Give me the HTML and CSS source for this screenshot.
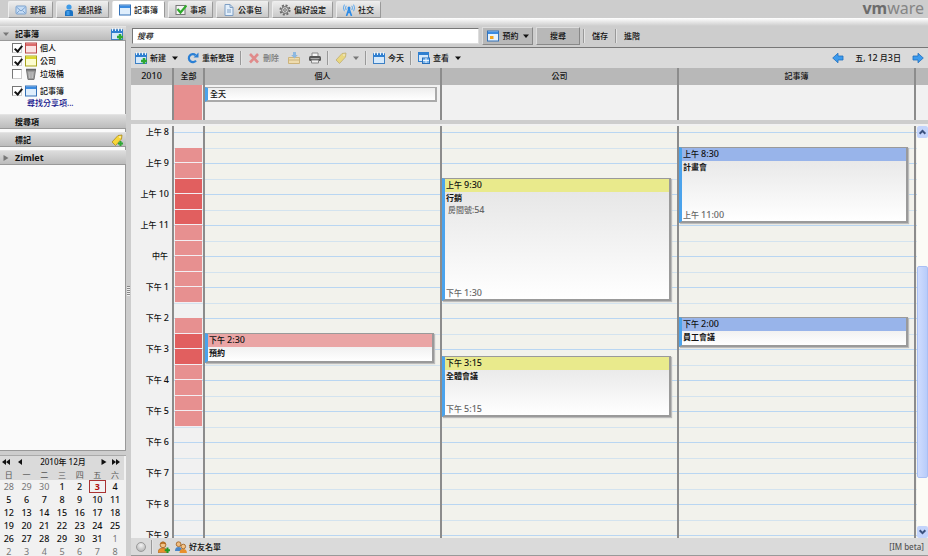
FILE: index.html
```html
<!DOCTYPE html>
<html lang="zh-Hant">
<head>
<meta charset="utf-8">
<title>記事簿</title>
<link rel="stylesheet" href="styles.css">
</head>
<body>
<svg class="defs" aria-hidden="true">
  <symbol id="mail" viewBox="0 0 12 12"><rect x="1" y="2" width="10" height="8" rx="1" fill="#c5dcf5" stroke="#7da3cf"/><path d="M1.500 3l4.500 4 4.500-4M1.500 9.500l3-3M10.500 9.500l-3-3" fill="none" stroke="#7da3cf"/></symbol>
  <symbol id="person" viewBox="0 0 12 12"><path d="M2 12V8q0-2 2.500-2h3Q10 6 10 8v4z" fill="#1b73c4"/><circle cx="6" cy="3" r="2.600" fill="#3f9be8"/><path d="M3.500 7h3v4h-3z" fill="#3f9be8"/></symbol>
  <symbol id="cal-blue" viewBox="0 0 12 12"><rect x=".5" y="1" width="11" height="10" fill="#dfeefc" stroke="#3572b8"/><path d="M1 1.500h10V4H1z" fill="#3b8be0"/></symbol>
  <symbol id="cal-red" viewBox="0 0 12 12"><rect x=".5" y="1" width="11" height="10" fill="#fbe3e3" stroke="#b84a4a"/><path d="M1 1.500h10V4H1z" fill="#dc6b6b"/></symbol>
  <symbol id="cal-yellow" viewBox="0 0 12 12"><rect x=".5" y="1" width="11" height="10" fill="#fdfdd0" stroke="#a9a51f"/><path d="M1 1.500h10V4H1z" fill="#dcd82f"/></symbol>
  <symbol id="cal-pad" viewBox="0 0 12 12"><rect x=".5" y="2" width="11" height="9.500" fill="#d5e9fb" stroke="#3d80c4"/><path d="M0 1.500h12V5H0z" fill="#2f7fd0"/><path d="M1.500 0v3M4.500 0v3M7.500 0v3M10.500 0v3" stroke="#e8f3fd"/></symbol>
  <symbol id="cal-new" viewBox="0 0 12 12"><use href="#cal-pad"/><path d="M9 6v6M6 9h6" stroke="#2fa836" stroke-width="2.500"/></symbol>
  <symbol id="check" viewBox="0 0 12 12"><rect x="1" y="1.500" width="9" height="9" fill="#f4f4f4" stroke="#777"/><path d="M2.500 5l3 3.500L11.500 1.500" fill="none" stroke="#2faa2b" stroke-width="2.200"/></symbol>
  <symbol id="doc" viewBox="0 0 12 12"><path d="M2 .5h5l3 3v8H2z" fill="#e3effb" stroke="#7f9fc4"/><path d="M7 .5v3h3M4 6h4M4 8h4" fill="none" stroke="#7f9fc4"/></symbol>
  <symbol id="gear" viewBox="0 0 12 12"><circle cx="6" cy="6" r="4.600" fill="none" stroke="#6b6b6b" stroke-width="2" stroke-dasharray="2 1.610"/><circle cx="6" cy="6" r="3.400" fill="#d6d6d6" stroke="#6b6b6b"/><circle cx="6" cy="6" r="1.300" fill="#f0f0f0" stroke="#6b6b6b"/></symbol>
  <symbol id="social" viewBox="0 0 12 12"><path d="M6 4.500L3.500 12M6 4.500L8.500 12M4.500 8.500h3" fill="none" stroke="#2d8be6" stroke-width="1.600"/><circle cx="6" cy="4" r="1.500" fill="#2d8be6"/><path d="M3.200 1.800q-1.400 2 0 4.200M1.400.6q-2 3.200 0 6.600M8.800 1.800q1.400 2 0 4.200M10.600.6q2 3.200 0 6.600" fill="none" stroke="#5ba8ee"/></symbol>
  <symbol id="trash" viewBox="0 0 12 12"><path d="M1.500 2h9l-1.500 9.500H3z" fill="#9b9b9b" stroke="#777"/><path d="M1 1.500h10" stroke="#666" stroke-width="1.500"/><path d="M4 4l.5 6M6 4v6M8 4l-.5 6" stroke="#cfcfcf" stroke-width=".8"/></symbol>
  <symbol id="tag" viewBox="0 0 12 12"><path d="M1 8L7 1.500 11 1l-.5 4L4.500 11.500z" fill="#f7d637" stroke="#a98a22" stroke-width=".8"/><circle cx="9" cy="3" r=".8" fill="#fff"/></symbol>
  <symbol id="tag-new" viewBox="0 0 12 12"><use href="#tag"/><path d="M9.500 7v5M7 9.500h5" stroke="#2fa836" stroke-width="2"/></symbol>
  <symbol id="appt" viewBox="0 0 12 12"><rect x=".5" y="1" width="11" height="10" fill="#e6f2fd" stroke="#3572b8"/><path d="M1 1.500h10V4H1z" fill="#3b8be0"/><rect x="3" y="6" width="3.500" height="3" fill="#f2a51e"/></symbol>
  <symbol id="refresh" viewBox="0 0 12 12"><path d="M9 8.600A4 4 0 1 1 8.600 3.200" fill="none" stroke="#2a7fd4" stroke-width="2.200"/><path d="M6.500 5.500h5V.5z" fill="#2a7fd4"/></symbol>
  <symbol id="delete" viewBox="0 0 12 12"><path d="M2 2l8 8.500M10 2l-8 8.500" stroke="#e08b8b" stroke-width="2.600"/></symbol>
  <symbol id="move" viewBox="0 0 12 12"><path d="M.5 11.500V5.500H11.500v6z" fill="#efdcae" stroke="#cdb47c"/><path d="M1 8h10" stroke="#cdb47c"/><path d="M5 0h3v3h1.800L6.500 6.500 3.200 3H5z" fill="#8db8e0"/></symbol>
  <symbol id="print" viewBox="0 0 12 12"><path d="M3 1h6v4H3z" fill="#f5f5f5" stroke="#888"/><rect x="0" y="4" width="12" height="5" rx="1.500" fill="#555"/><path d="M1.500 6.500h9" stroke="#aaa"/><path d="M2.500 8h7v3h-7z" fill="#f0f0f0" stroke="#888"/></symbol>
  <symbol id="view" viewBox="0 0 12 12"><rect x=".5" y=".5" width="10" height="9" fill="#d5e9fb" stroke="#2f7fd0"/><path d="M0 0h11v3H0z" fill="#2f7fd0"/><rect x="4.500" y="6" width="7" height="5.500" fill="#7eb8ee" stroke="#2a6fb8"/><path d="M5 8.500h6M8 6v5" stroke="#e8f3fd"/></symbol>
  <symbol id="arrow-right" viewBox="0 0 12 12"><path d="M1 4h5V1.200L11.300 6 6 10.800V8H1z" fill="#3c9bee" stroke="#1f6fbe" stroke-width=".8"/></symbol>
  <symbol id="arrow-left" viewBox="0 0 12 12"><path d="M11 4H6V1.200L.7 6 6 10.800V8h5z" fill="#3c9bee" stroke="#1f6fbe" stroke-width=".8"/></symbol>
  <symbol id="down" viewBox="0 0 6 6"><path d="M0 1.500h6L3 5z" fill="currentColor"/></symbol>
  <symbol id="tri-right" viewBox="0 0 6 6"><path d="M.5 0v6l5-3z" fill="currentColor"/></symbol>
  <symbol id="tri-left" viewBox="0 0 6 6"><path d="M5 0v6L1 3z" fill="currentColor"/></symbol>
  <symbol id="ff-right" viewBox="0 0 8 6"><path d="M0 0v6l4-3zM4 0v6l4-3z" fill="currentColor"/></symbol>
  <symbol id="ff-left" viewBox="0 0 8 6"><path d="M8 0v6L4 3zM4 0v6L0 3z" fill="currentColor"/></symbol>
  <symbol id="buddy" viewBox="0 0 12 12"><path d="M0 11.500Q0 7 5 7t5 4.500z" fill="#e8902c" stroke="#a8601a" stroke-width=".6"/><circle cx="5" cy="3.800" r="2.900" fill="#f3c488" stroke="#9a5a1a" stroke-width=".8"/><path d="M2.200 3.500Q2.500.7 5 .7t2.800 2.800Q5 1.800 2.200 3.500" fill="#b86e22"/></symbol>
  <symbol id="buddy-add" viewBox="0 0 12 12"><use href="#buddy"/><path d="M9.500 6.500v5.500M6.700 9.200h5.300" stroke="#1f9a26" stroke-width="2"/></symbol>
  <symbol id="buddies" viewBox="0 0 12 12"><path d="M0 10q0-4 3.500-4T7 10z" fill="#4b86c6"/><circle cx="3.600" cy="3.200" r="2.400" fill="#efbd80" stroke="#9a5a1a" stroke-width=".8"/><path d="M4.500 12q0-4 3.700-4t3.700 4z" fill="#e8902c"/><circle cx="8.300" cy="5.500" r="2.300" fill="#f3c488" stroke="#9a5a1a" stroke-width=".8"/></symbol>
  <symbol id="chev-up" viewBox="0 0 8 8"><path d="M1.500 5.500L4 3l2.500 2.500" fill="none" stroke="#3c537f" stroke-width="1.800"/></symbol>
  <symbol id="chev-down" viewBox="0 0 8 8"><path d="M1.500 2.500L4 5l2.500-2.500" fill="none" stroke="#3c537f" stroke-width="1.800"/></symbol>
</svg>

<div class="app">
  <header class="topbar">
    <nav class="tabs">
      <button class="tab"><svg class="icon"><use href="#mail"/></svg>郵箱</button>
      <button class="tab"><svg class="icon"><use href="#person"/></svg>通訊錄</button>
      <button class="tab active"><svg class="icon"><use href="#cal-blue"/></svg>記事簿</button>
      <button class="tab"><svg class="icon"><use href="#check"/></svg>事項</button>
      <button class="tab"><svg class="icon"><use href="#doc"/></svg>公事包</button>
      <button class="tab"><svg class="icon"><use href="#gear"/></svg>偏好設定</button>
      <button class="tab"><svg class="icon"><use href="#social"/></svg>社交</button>
    </nav>
    <div class="logo"><b>vm</b>ware</div>
  </header>
  <div class="strip"></div>

  <div class="workspace">
    <aside class="sidebar">
      <h2 class="section"><svg class="mark"><use href="#down"/></svg>記事簿<svg class="icon end"><use href="#cal-new"/></svg></h2>
      <div class="folders">
        <label class="folder"><input type="checkbox" checked><svg class="icon"><use href="#cal-red"/></svg>個人</label>
        <label class="folder"><input type="checkbox" checked><svg class="icon"><use href="#cal-yellow"/></svg>公司</label>
        <label class="folder"><input type="checkbox"><svg class="icon"><use href="#trash"/></svg>垃圾桶</label>
        <label class="folder spaced"><input type="checkbox" checked><svg class="icon"><use href="#cal-blue"/></svg>記事簿</label>
        <a class="find" href="#">尋找分享項...</a>
      </div>
      <h2 class="section">搜尋項</h2>
      <div class="sliver"></div>
      <h2 class="section">標記<svg class="icon end"><use href="#tag-new"/></svg></h2>
      <div class="sliver"></div>
      <h2 class="section"><svg class="mark"><use href="#tri-right"/></svg><span class="num">Zimlet</span></h2>
      <div class="blank"></div>
      <section class="minical">
        <div class="month">
          <button class="nav" aria-label="上一年"><svg><use href="#ff-left"/></svg></button>
          <button class="nav" aria-label="上個月"><svg><use href="#tri-left"/></svg></button>
          <span class="title">2010年 12月</span>
          <button class="nav" aria-label="下個月"><svg><use href="#tri-right"/></svg></button>
          <button class="nav" aria-label="下一年"><svg><use href="#ff-right"/></svg></button>
        </div>
        <table class="days">
          <thead><tr><th>日</th><th>一</th><th>二</th><th>三</th><th>四</th><th>五</th><th>六</th></tr></thead>
          <tbody>
            <tr><td class="off">28</td><td class="off">29</td><td class="off">30</td><td>1</td><td>2</td><td class="today">3</td><td>4</td></tr>
            <tr><td>5</td><td>6</td><td>7</td><td>8</td><td>9</td><td>10</td><td>11</td></tr>
            <tr><td>12</td><td>13</td><td>14</td><td>15</td><td>16</td><td>17</td><td>18</td></tr>
            <tr><td>19</td><td>20</td><td>21</td><td>22</td><td>23</td><td>24</td><td>25</td></tr>
            <tr><td>26</td><td>27</td><td>28</td><td>29</td><td>30</td><td>31</td><td class="off">1</td></tr>
            <tr><td class="off">2</td><td class="off">3</td><td class="off">4</td><td class="off">5</td><td class="off">6</td><td class="off">7</td><td class="off">8</td></tr>
          </tbody>
        </table>
      </section>
    </aside>
    <div class="splitter"><i class="grip"></i></div>

    <main class="main">
      <form class="search">
        <input class="query" type="text" placeholder="搜尋" aria-label="搜尋">
        <button class="push kind" type="button"><svg class="icon"><use href="#appt"/></svg>預約<svg class="caret"><use href="#down"/></svg></button>
        <button class="push go" type="button">搜尋</button>
        <i class="sep"></i>
        <button class="plain" type="button">儲存</button>
        <i class="sep"></i>
        <button class="plain" type="button">進階</button>
      </form>
      <div class="toolbar">
        <button class="tool"><svg class="icon"><use href="#cal-new"/></svg>新建<svg class="caret"><use href="#down"/></svg></button>
        <button class="tool"><svg class="icon"><use href="#refresh"/></svg>重新整理</button>
        <i class="sep"></i>
        <button class="tool dim"><svg class="icon"><use href="#delete"/></svg>刪除</button>
        <button class="tool" aria-label="移動"><svg class="icon"><use href="#move"/></svg></button>
        <button class="tool" aria-label="列印"><svg class="icon"><use href="#print"/></svg></button>
        <i class="sep"></i>
        <button class="tool dim" aria-label="標記"><svg class="icon faded"><use href="#tag"/></svg><svg class="caret"><use href="#down"/></svg></button>
        <i class="sep"></i>
        <button class="tool"><svg class="icon"><use href="#cal-pad"/></svg>今天</button>
        <i class="sep"></i>
        <button class="tool"><svg class="icon"><use href="#view"/></svg>查看<svg class="caret"><use href="#down"/></svg></button>
        <div class="pager">
          <button class="tool" aria-label="前一天"><svg class="icon"><use href="#arrow-left"/></svg></button>
          <span>五, <span class="num">12</span> 月<span class="num">3</span>日</span>
          <button class="tool" aria-label="後一天"><svg class="icon"><use href="#arrow-right"/></svg></button>
        </div>
      </div>

      <div class="row heads">
        <div class="num">2010</div><div>全部</div><div>個人</div><div>公司</div><div>記事簿</div><div></div>
      </div>
      <div class="row allday">
        <div></div><div class="busy"></div>
        <div><div class="banner">全天</div></div>
        <div></div><div></div><div></div>
      </div>
      <div class="divider"></div>
      <div class="row grid">
        <ol class="hours">
          <li>上午 <span class="num">8</span></li><li>上午 <span class="num">9</span></li><li>上午 <span class="num">10</span></li><li>上午 <span class="num">11</span></li><li class="noon">中午</li><li>下午 <span class="num">1</span></li><li>下午 <span class="num">2</span></li><li>下午 <span class="num">3</span></li><li>下午 <span class="num">4</span></li><li>下午 <span class="num">5</span></li><li>下午 <span class="num">6</span></li><li>下午 <span class="num">7</span></li><li>下午 <span class="num">8</span></li><li>下午 <span class="num">9</span></li>
        </ol>
        <div class="lane load">
          <i></i><i class="one"></i><i class="one"></i><i class="two"></i><i class="two"></i><i class="two"></i><i class="one"></i><i class="one"></i><i class="one"></i><i class="one"></i><i class="one"></i><i></i><i class="one"></i><i class="two"></i><i class="two"></i><i class="one"></i><i class="one"></i><i class="one"></i><i class="one"></i>
        </div>
        <div class="lane">
          <article class="event red" style="top:207px;height:30px"><header>下午 <span class="num">2:30</span></header><h3>預約</h3></article>
        </div>
        <div class="lane">
          <article class="event yellow" style="top:52px;height:123px"><header>上午 <span class="num">9:30</span></header><h3>行銷</h3><p>房間號:<span class="num">54</span></p><footer>下午 <span class="num">1:30</span></footer></article>
          <article class="event yellow" style="top:230px;height:61px"><header>下午 <span class="num">3:15</span></header><h3>全體會議</h3><footer>下午 <span class="num">5:15</span></footer></article>
        </div>
        <div class="lane">
          <article class="event blue" style="top:21px;height:76px"><header>上午 <span class="num">8:30</span></header><h3>計畫會</h3><footer>上午 <span class="num">11:00</span></footer></article>
          <article class="event blue" style="top:191px;height:30px"><header>下午 <span class="num">2:00</span></header><h3>員工會議</h3></article>
        </div>
        <div class="lane last">
          <div class="scroll">
            <svg class="cap"><use href="#chev-up"/></svg>
            <div class="track"><div class="thumb"></div></div>
            <svg class="cap"><use href="#chev-down"/></svg>
          </div>
        </div>
      </div>
      <footer class="status">
        <i class="orb"></i><i class="sep"></i>
        <button class="tool" aria-label="新增好友"><svg class="icon"><use href="#buddy-add"/></svg></button>
        <button class="tool"><svg class="icon"><use href="#buddies"/></svg>好友名單</button>
        <span class="beta">[IM beta]</span>
      </footer>
    </main>
  </div>
</div>
</body>
</html>
```
FILE: styles.css
```css
* { box-sizing: border-box; }
body, h2, h3, p, ol { margin: 0; padding: 0; }
body {
  background: #cdcdcd;
  color: #111;
  font: 500 8px/12px "Noto Sans", "Noto Sans CJK TC", sans-serif;
}
button, input { font: inherit; color: inherit; }
button { border: 0; background: none; padding: 0; white-space: nowrap; }
ol { list-style: none; }
svg { display: block; flex: none; }
.defs { position: absolute; width: 0; height: 0; }
.icon { width: 12px; height: 12px; }
.caret { width: 6px; height: 6px; }
.num { font-size: 9px; }
.faded { opacity: .55; }
.sep {
  width: 2px;
  height: 14px;
  flex: none;
  border-left: 1px solid #999;
  border-right: 1px solid #e4e4e4;
}

.app { display: flex; flex-direction: column; height: 100vh; overflow: hidden; }
.topbar { display: flex; align-items: flex-start; justify-content: space-between; height: 18px; flex: none; padding: 0 4px 0 8px; }
.tabs { display: flex; gap: 3px; height: 17px; margin-top: 1px; }
.tab {
  display: flex;
  align-items: center;
  gap: 3px;
  padding: 0 6px;
  border: 1px solid #999;
  border-top-color: #eee;
  border-left-color: #eee;
  border-radius: 2px 2px 0 0;
  background: linear-gradient(#ececec, #c9c9c9);
}
.tab.active { background: #fff; border-color: #fff #999 #fff #eee; }
.logo { color: #858585; font-size: 16px; font-weight: 400; line-height: 16px; }
.logo b { color: #6c6c6c; font-weight: 700; }
.strip { height: 8px; flex: none; background: linear-gradient(#fff, #cdcdcd); }

.workspace { display: flex; flex: 1; min-height: 0; }
.sidebar { display: flex; flex-direction: column; width: 126px; flex: none; overflow: hidden; }
.section {
  display: flex;
  align-items: center;
  height: 15px;
  flex: none;
  padding: 0 3px 0 15px;
  border-top: 1px solid #e4e4e4;
  border-bottom: 1px solid #999;
  background: linear-gradient(#dcdcdc, #bcbcbc);
  font-size: 8px;
  font-weight: 700;
}
.mark { width: 6px; height: 6px; margin: 0 6px 0 -12px; color: #777; }
.end { margin-left: auto; }
.folders {
  display: flex;
  flex-direction: column;
  height: 73px;
  flex: none;
  background: #fafafa;
  border-right: 1px solid #999;
}
.folder { display: flex; align-items: center; gap: 3px; height: 13px; padding-left: 12px; }
.folder.spaced { margin-top: 4px; }
.folder input {
  appearance: none;
  width: 10px;
  height: 10px;
  margin: 0;
  border: 1px solid #777;
  border-right-color: #ccc;
  border-bottom-color: #ccc;
  background: #fff;
}
.folder input:checked::before {
  content: "";
  display: block;
  width: 3px;
  height: 6px;
  margin: 0 0 0 3px;
  border: solid #111;
  border-width: 0 2px 2px 0;
  transform: rotate(40deg);
}
.find { padding-left: 27px; color: #11118c; text-decoration: none; }
.sliver { height: 3px; flex: none; background: #fafafa; border-right: 1px solid #999; }
.blank { flex: 1; background: #fafafa; border: solid #999; border-width: 0 1px 1px 0; margin-bottom: 4px; }
.minical { flex: none; height: 101px; overflow: hidden; padding-right: 2px; background: #f1f1f1; border-top: 1px solid #aaa; }
.month { display: flex; align-items: center; height: 12px; padding: 0 4px 0 2px; background: #dadada; }
.nav { display: flex; width: 14px; justify-content: flex-start; }
.nav svg { width: 8px; height: 6px; }
.title { flex: 1; text-align: center; }
.nav:nth-last-child(-n+2) { width: 12px; justify-content: flex-end; }
.days { width: 100%; table-layout: fixed; border-collapse: collapse; text-align: center; }
.days th { height: 12px; padding: 0; background: #dadada; color: #555; font-weight: 400; line-height: 11px; }
.days td { height: 13px; padding: 0; font-size: 9px; line-height: 12px; }
.days .off { color: #777; font-weight: 400; }
.days .today { outline: 1px solid #a33; outline-offset: -1px; color: #b01010; font-weight: 700; }
.splitter { display: flex; align-items: center; width: 5px; flex: none; }
.grip { width: 3px; height: 10px; margin-left: 1px; background: repeating-linear-gradient(#888 0 1px, #eee 1px 2px); }

.main { display: flex; flex-direction: column; flex: 1; min-width: 0; }
.search { display: flex; align-items: center; gap: 3px; height: 22px; flex: none; padding: 0 0 2px 1px; border-bottom: 1px solid #777; }
.query {
  flex: 0 1 347px;
  min-width: 0;
  height: 16px;
  padding: 0 4px;
  border: 1px solid #777;
  border-right-color: #ddd;
  border-bottom-color: #ddd;
  background: #fff;
}
.query::placeholder { color: #222; font-style: italic; }
.push {
  display: flex;
  align-items: center;
  justify-content: center;
  gap: 4px;
  height: 18px;
  border: 1px solid #888;
  border-top-color: #ddd;
  border-left-color: #ddd;
  background: #b8b8b8;
}
.kind { width: 51px; }
.go { width: 44px; }
.plain { padding: 0 4px; }
.toolbar { display: flex; align-items: center; gap: 9px; height: 20px; flex: none; padding: 0 4px; background: #dadada; }
.toolbar .sep { margin: 0 -3px; }
.tool { display: flex; align-items: center; gap: 3px; }
.tool .caret { margin-left: 3px; }
.dim { color: #777; }
.pager { display: flex; align-items: center; gap: 11px; margin-left: auto; }

.row { display: grid; grid-template-columns: 41px 31px repeat(3, 1fr) 14px; flex: none; }
.row > * { min-width: 0; }
.row > * + * { border-left: 2px solid #8c8c8c; }
.heads { height: 17px; background: #b8b8b8; line-height: 16px; text-align: center; }
.allday { height: 35px; background: #f1f1f1; }
.busy { background: #e79090; border-right: 1px solid #f1f1f1; }
.banner {
  margin: 2px 3px 0 0;
  height: 15px;
  padding-left: 2px;
  border: solid #aaa;
  border-width: 1px 2px 2px 0;
  border-left: 3px solid #4ba3ec;
  background: linear-gradient(#eee, #fff);
}
.divider { height: 6px; flex: none; background: linear-gradient(#cdcdcd 4px, #f1f1f1 4px); }
.grid { flex: 1; min-height: 0; overflow: hidden; background: #f1f1f1; }
.hours { display: flex; flex-direction: column; gap: 19px; height: 0; padding-right: 3px; text-align: right; white-space: nowrap; }
.hours li { height: 12px; flex: none; }
.noon { padding-right: 1px; }
.lane {
  position: relative;
  background: #f2f2ec repeating-linear-gradient(transparent 0 6px, #b9d6f2 6px 7px, transparent 7px 22px, #d3e3ef 22px 23px, transparent 23px 31px);
}
.load { display: flex; flex-direction: column; padding: 6px 1px 0 1px; background-color: #f1f1f1; }
.load i { flex: none; border-bottom: 1px solid transparent; }
.load i:nth-child(odd) { height: 16px; }
.load i:nth-child(even) { height: 15px; }
.load .one { background: #e79090; border-color: #f3eef2; }
.load .two { background: #e15f5f; border-color: #f3eef2; }
.event {
  position: absolute;
  left: 0;
  right: 6px;
  border: 1px solid #9a9a9a;
  border-right-width: 2px;
  border-bottom-width: 2px;
  border-left: 3px solid #4ba3ec;
  background: linear-gradient(#e4e4e4, #fff);
  box-shadow: 1px 1px 1px #bbb;
}
.event header { height: 13px; padding-left: 1px; }
.event h3 { padding-left: 1px; font-size: 8px; font-weight: 700; }
.event p { padding-left: 3px; color: #666; }
.event footer { position: absolute; left: 1px; bottom: 0; color: #666; }
.red header { background: #eaa5a5; }
.yellow header { background: #e9ea8c; }
.blue header { background: #98b4ea; }
.last { background-color: #f2f2ec; }
.scroll { display: flex; flex-direction: column; height: 100%; margin-left: 1px; background: #fbfbf6; }
.cap { width: 11px; height: 12px; padding: 1px; border-radius: 2px; background: #c3d4fb; }
.track { flex: 1; display: grid; grid-template-rows: 128fr 212fr 48fr; }
.thumb { grid-row: 2; border: 1px solid #a9c0f4; border-radius: 2px; background: linear-gradient(90deg, #cfdcfd, #b8ccfa); }
.status { display: flex; align-items: center; gap: 5px; height: 18px; flex: none; padding: 0 4px 0 5px; background: #dadada; border-bottom: 1px solid #999; }
.status .tool { gap: 2px; }
.orb { width: 10px; height: 10px; border: 1px solid #999; border-radius: 50%; background: radial-gradient(circle at 50% 30%, #f2f2f2, #aaa); }
.beta { margin-left: auto; color: #555; }
```
